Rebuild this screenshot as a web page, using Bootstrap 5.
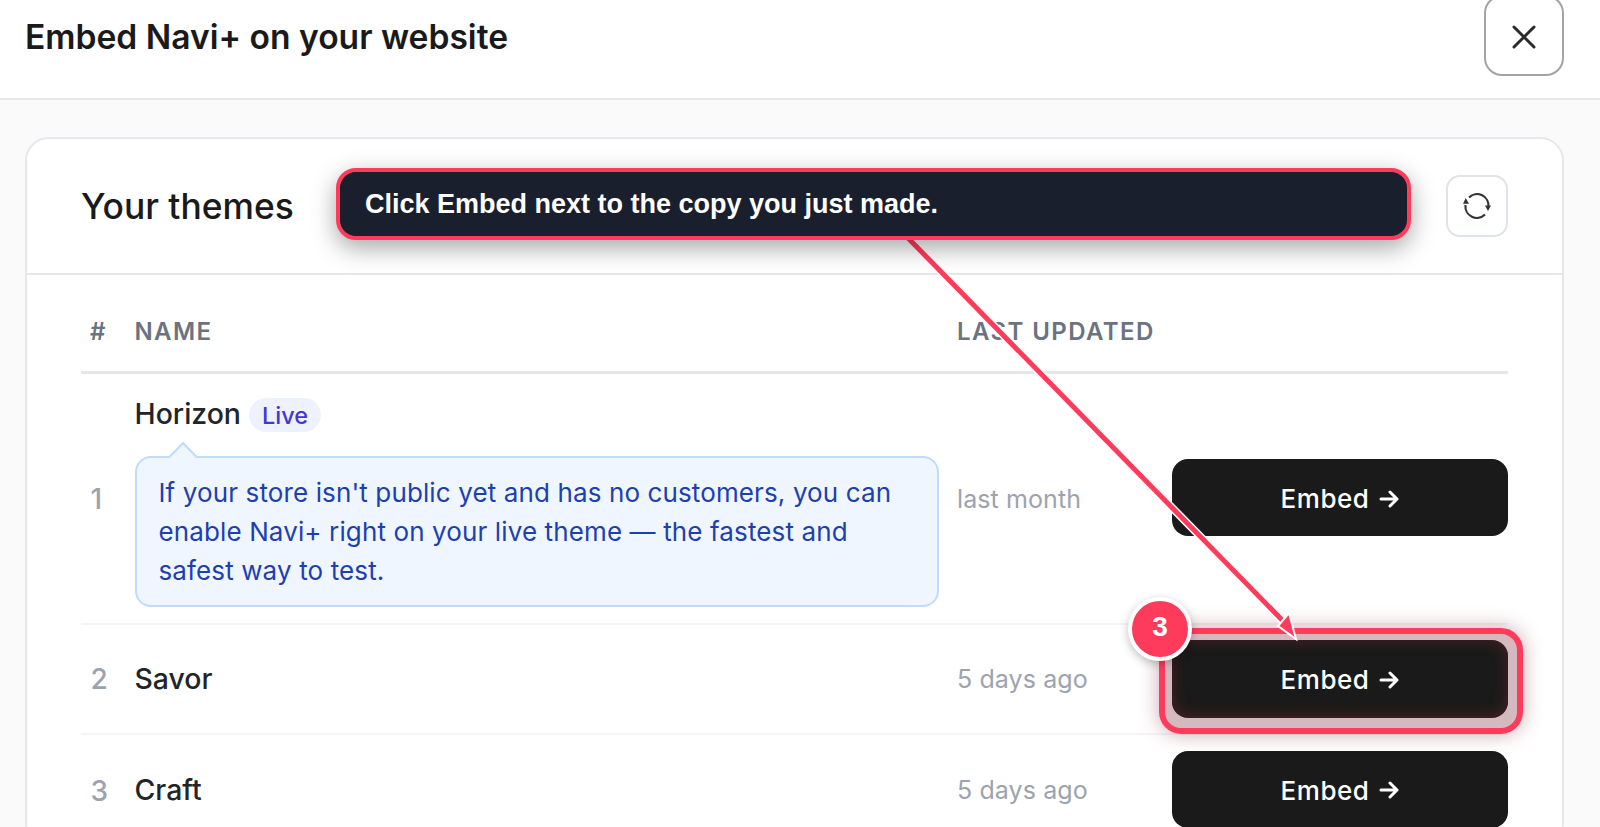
<!DOCTYPE html>
<html lang="en">
<head>
<meta charset="utf-8">
<title>Embed Navi+</title>
<link href="https://cdn.jsdelivr.net/npm/bootstrap@5.3.0/dist/css/bootstrap.min.css" rel="stylesheet">
<style>
html,body{height:827px;overflow:hidden}
body{font-family:Inter,"Liberation Sans",sans-serif;color:#1a1a1a;background:#fafafa;position:relative}
.top-bar{height:100px;background:#fff;border-bottom:2px solid #e5e7eb;padding-left:25px;padding-right:36px}
.top-title{font-size:33.6px;font-weight:600;line-height:1;margin:0;position:relative;top:-12px}
.close-btn{width:80px;height:81px;margin-top:-5px;padding:2px 0 0;background:#fff;border:2px solid #a3a3a3;border-radius:18px}
.main-area{padding:37px 36px 0 25px}
.theme-card{border:2px solid #e5e7eb;border-radius:24px;overflow:hidden;background:#fff}
.theme-head{height:136px;background:#fff;border-bottom:2px solid #e5e7eb;padding:2px 54px 0 54px}
.theme-title{font-size:35.4px;font-weight:500;margin:0;line-height:1}
.refresh-btn{width:62px;height:62px;margin-top:-2px;background:#fff;border:2px solid #e0e3e8;border-radius:14px;padding:0}
.theme-body{padding:0 54px}
.theme-table{table-layout:fixed;width:100%;margin:0;--bs-table-bg:transparent}
.theme-table th{font-size:24px;font-weight:600;letter-spacing:1.4px;color:#6b7280;padding:19px 0 0;height:97px;border-bottom:3px solid #e5e7eb;vertical-align:middle;line-height:1}
.theme-table td{padding:16px 0 15px;vertical-align:middle;border-bottom:2px solid #f3f4f6}
.theme-table tbody tr:first-child td:last-child{padding-bottom:17px}
.theme-table tbody tr:last-child td.text-shift{padding-top:19px}
.num-col{width:53.5px}.name-col{width:822.5px}.date-col{width:215px}
.theme-table th.hash-head{padding-left:9px}
.theme-table td.num-cell{font-size:28px;font-weight:500;color:#9ca3af;padding-left:9.5px}
.name-cell{font-size:28.4px;font-weight:550;line-height:1.2}
.theme-table td.date-cell{font-size:25px;color:#9ca3af;letter-spacing:.1px;padding-top:18px}
.name-line{height:50px;gap:8px}
.live-tag{font-size:23.5px;font-weight:500;color:#4338ca;background:#eef2ff;border-radius:17px;padding:1px 13px 0;height:34px;line-height:34px}
.tip-box{position:relative;margin:16px 0 1px;width:804px;height:151px;background:#eff6ff;border:2px solid #bfdbfe;border-radius:16px;padding:15px 22px;font-size:26px;font-weight:400;line-height:39px;color:#1e40af;letter-spacing:.12px}
.tip-box::before{content:"";position:absolute;left:36px;top:-12px;width:20px;height:20px;background:#eff6ff;border-left:2px solid #bfdbfe;border-top:2px solid #bfdbfe;transform:rotate(45deg)}
.embed-btn{width:336px;height:77px;padding:2px 0 0;background:#1a1a1a;color:#fff;border:0;border-radius:16px;font-size:26px;font-weight:550;letter-spacing:.55px;gap:10px}
.embed-btn:hover{background:#1a1a1a;color:#fff}
.embed-glow{box-shadow:inset 0 0 16px rgba(255,59,92,.22)}
.guide-tip{position:absolute;left:336px;top:168px;width:1075px;height:72px;background:#1a1f2e;border:4px solid #ff3b5c;border-radius:20px;box-shadow:0 8px 24px rgba(0,0,0,.35);color:#fff;font-family:"Liberation Sans",sans-serif;font-weight:700;font-size:27px;padding-left:25px;line-height:64px;z-index:5}
.guide-ring{position:absolute;left:1159px;top:628px;width:364px;height:106px;border:6px solid #ff3b5c;border-radius:22px;background:rgba(120,40,55,.32);box-shadow:0 0 20px rgba(120,40,55,.4);z-index:2}
.guide-btn{position:absolute;left:1172px;top:640px;z-index:3}
.guide-num{position:absolute;left:1128px;top:597px;width:64px;height:64px;padding-bottom:4px;border-radius:50%;background:#ff3b5c;border:4px solid #fff;color:#fff;font-family:"Liberation Sans",sans-serif;font-weight:700;font-size:28px;box-shadow:0 3px 10px rgba(0,0,0,.25);z-index:6}
.guide-line{position:absolute;left:0;top:0;width:1600px;height:827px;z-index:4;pointer-events:none}
</style>
</head>
<body>
<header class="top-bar d-flex align-items-start justify-content-between">
  <h1 class="top-title align-self-center">Embed Navi+ on your website</h1>
  <button class="close-btn d-flex align-items-center justify-content-center" aria-label="Close">
    <svg width="26" height="26" viewBox="0 0 26 26" fill="none" stroke="#2b2b2b" stroke-width="3" stroke-linecap="round"><path d="M3 3 23 23M23 3 3 23"/></svg>
  </button>
</header>
<main class="main-area">
  <section class="card theme-card">
    <div class="theme-head d-flex align-items-center justify-content-between">
      <h2 class="theme-title">Your themes</h2>
      <button class="refresh-btn d-flex align-items-center justify-content-center" aria-label="Refresh">
        <svg width="30" height="30" viewBox="0 0 30 30" fill="none" stroke="#333" stroke-width="2.2"><path d="M3.5 14A11.5 11.5 0 0 0 23 23.5"/><path d="M26.5 16A11.5 11.5 0 0 0 7 6.5"/><path d="M1 12.7H7L3.7 7z" fill="#333" stroke="none"/><path d="M23 14.5H29L26 20z" fill="#333" stroke="none"/></svg>
      </button>
    </div>
    <div class="theme-body">
      <table class="table theme-table">
        <colgroup><col class="num-col"><col class="name-col"><col class="date-col"><col></colgroup>
        <thead><tr><th class="hash-head">#</th><th>NAME</th><th>LAST UPDATED</th><th></th></tr></thead>
        <tbody>
          <tr>
            <td class="num-cell">1</td>
            <td class="name-cell">
              <div class="name-line d-flex align-items-center">Horizon <span class="live-tag">Live</span></div>
              <div class="tip-box">If your store isn't public yet and has no customers, you can enable Navi+ right on your live theme — the fastest and safest way to test.</div>
            </td>
            <td class="date-cell">last month</td>
            <td><button class="btn embed-btn d-flex align-items-center justify-content-center">Embed <svg width="20" height="18" viewBox="0 0 20 18" fill="none" stroke="#fff" stroke-width="3" stroke-linecap="round" stroke-linejoin="round"><path d="M2 9H18M11 2l7 7-7 7"/></svg></button></td>
          </tr>
          <tr>
            <td class="num-cell">2</td>
            <td class="name-cell">Savor</td>
            <td class="date-cell">5 days ago</td>
            <td><div class="embed-btn"></div></td>
          </tr>
          <tr>
            <td class="num-cell text-shift">3</td>
            <td class="name-cell text-shift">Craft</td>
            <td class="date-cell text-shift">5 days ago</td>
            <td><button class="btn embed-btn d-flex align-items-center justify-content-center">Embed <svg width="20" height="18" viewBox="0 0 20 18" fill="none" stroke="#fff" stroke-width="3" stroke-linecap="round" stroke-linejoin="round"><path d="M2 9H18M11 2l7 7-7 7"/></svg></button></td>
          </tr>
        </tbody>
      </table>
    </div>
  </section>
</main>
<div class="guide-ring"></div>
<button class="btn embed-btn embed-glow guide-btn d-flex align-items-center justify-content-center">Embed <svg width="20" height="18" viewBox="0 0 20 18" fill="none" stroke="#fff" stroke-width="3" stroke-linecap="round" stroke-linejoin="round"><path d="M2 9H18M11 2l7 7-7 7"/></svg></button>
<svg class="guide-line" viewBox="0 0 1600 827" fill="none">
  <path d="M908 238 1286 624" stroke="#fff" stroke-width="8"/>
  <path d="M908 238 1286 624" stroke="#ff3b5c" stroke-width="5"/>
  <path d="M1278 626 1289 613 1296 639z" fill="#ff3b5c" stroke="#fff" stroke-width="2"/>
</svg>
<div class="guide-tip">Click Embed next to the copy you just made.</div>
<div class="guide-num d-flex align-items-center justify-content-center">3</div>
<script src="https://cdn.jsdelivr.net/npm/bootstrap@5.3.0/dist/js/bootstrap.bundle.min.js"></script>
</body>
</html>
